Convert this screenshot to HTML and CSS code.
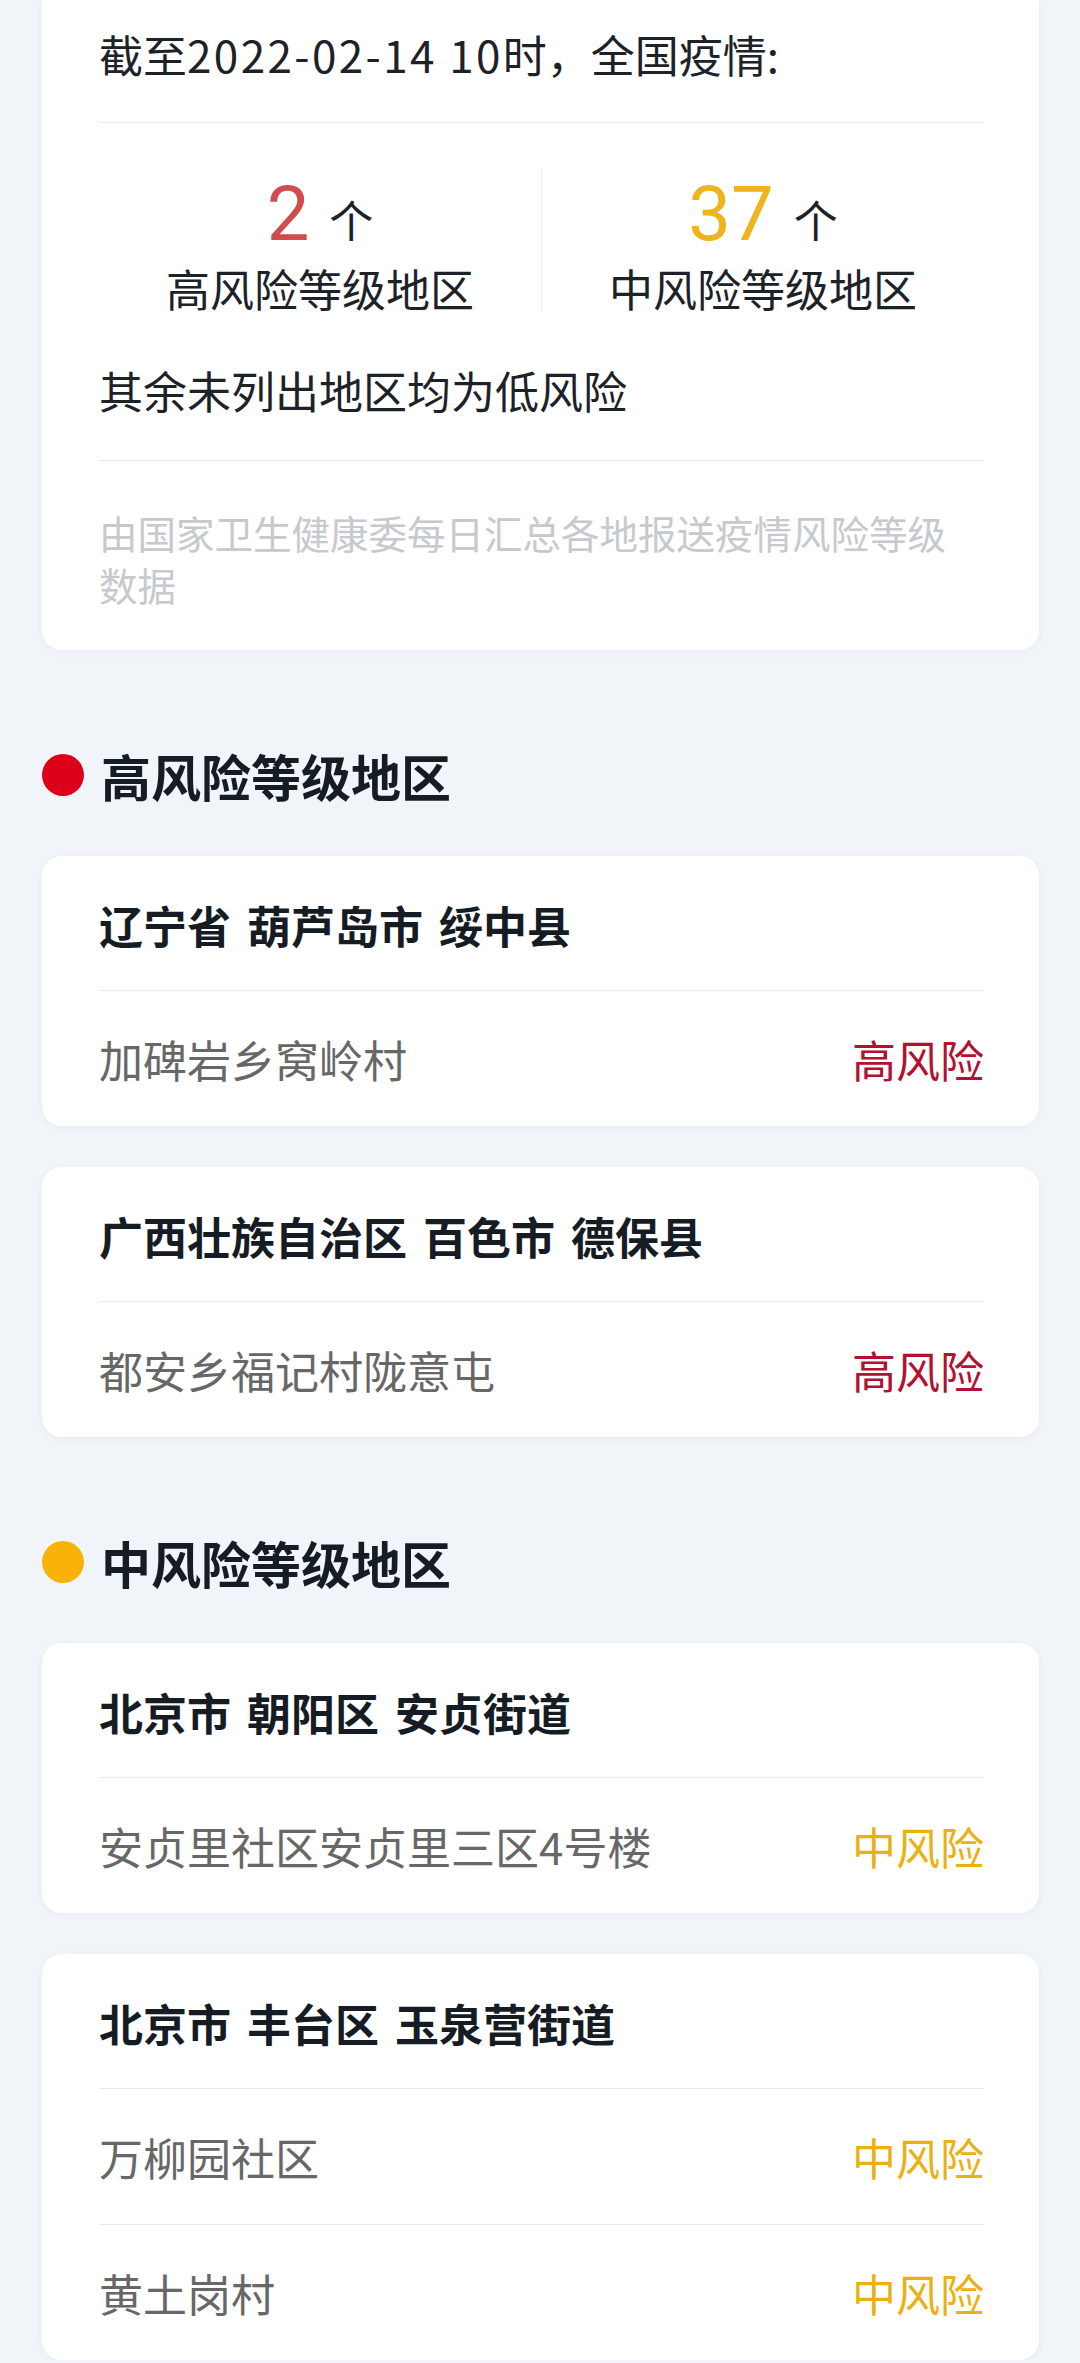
FILE: index.html
```html
<!DOCTYPE html>
<html lang="zh-CN">
<head>
<meta charset="utf-8">
<title>风险等级地区</title>
<link rel="stylesheet" href="styles.css">
</head>
<body>
<main class="page">
  <section class="card card-summary">
    <div class="summary-head">截至<span class="date">2022-02-14 10</span>时，全国疫情:</div>
    <div class="stats">
      <div class="stat">
        <div class="stat-num"><span class="num num-high">2</span><span class="unit">个</span></div>
        <div class="stat-label">高风险等级地区</div>
      </div>
      <div class="stat-divider"></div>
      <div class="stat">
        <div class="stat-num"><span class="num num-mid">37</span><span class="unit">个</span></div>
        <div class="stat-label">中风险等级地区</div>
      </div>
    </div>
    <div class="summary-rest">其余未列出地区均为低风险</div>
    <div class="summary-note">由国家卫生健康委每日汇总各地报送疫情风险等级数据</div>
  </section>

  <h2 class="section-title"><span class="dot dot-high"></span>高风险等级地区</h2>

  <section class="card">
    <div class="row row-title">辽宁省 葫芦岛市 绥中县</div>
    <div class="row"><span class="place">加碑岩乡窝岭村</span><span class="risk risk-high">高风险</span></div>
  </section>

  <section class="card">
    <div class="row row-title">广西壮族自治区 百色市 德保县</div>
    <div class="row"><span class="place">都安乡福记村陇意屯</span><span class="risk risk-high">高风险</span></div>
  </section>

  <h2 class="section-title"><span class="dot dot-mid"></span>中风险等级地区</h2>

  <section class="card">
    <div class="row row-title">北京市 朝阳区 安贞街道</div>
    <div class="row"><span class="place">安贞里社区安贞里三区4号楼</span><span class="risk risk-mid">中风险</span></div>
  </section>

  <section class="card">
    <div class="row row-title">北京市 丰台区 玉泉营街道</div>
    <div class="row"><span class="place">万柳园社区</span><span class="risk risk-mid">中风险</span></div>
    <div class="row"><span class="place">黄土岗村</span><span class="risk risk-mid">中风险</span></div>
  </section>
</main>
</body>
</html>
```

FILE: styles.css
```css
html, body {
  margin: 0;
  padding: 0;
}
body {
  background: #f1f4f8;
  font-family: "Noto Sans CJK SC", "Noto Sans", sans-serif;
  color: #1b2129;
}
.page {
  padding: 0 41px 0 42px;
  display: flex;
  flex-direction: column;
}
.card {
  background: #ffffff;
  border-radius: 20px;
  box-shadow: 0 2px 10px rgba(20, 40, 80, 0.04);
  padding: 0 55px 0 57px;
}
.card + .card {
  margin-top: 41px;
}
.card-summary {
  border-radius: 0 0 20px 20px;
}
.summary-head {
  font-size: 44px;
  line-height: 60px;
  padding: 24px 0 38px;
  border-bottom: 1px solid #ececef;
  color: #1d2229;
}
.date {
  letter-spacing: 2.4px;
}
.stats {
  display: grid;
  grid-template-columns: 1fr 1px 1fr;
  padding-top: 47px;
}
.stat {
  display: flex;
  flex-direction: column;
  align-items: center;
}
.stat-num {
  height: 88px;
  display: flex;
  align-items: center;
  justify-content: center;
}
.num {
  font-family: Roboto, "Noto Sans", sans-serif;
  font-size: 76px;
  line-height: 88px;
}
.num-high { color: #d24b4d; }
.num-mid { color: #efb41c; }
.unit {
  font-size: 44px;
  line-height: 60px;
  margin-left: 20px;
  padding-top: 10px;
  color: #1d2229;
}
.stat-label {
  font-size: 44px;
  line-height: 60px;
  color: #1d2229;
}
.stat-divider {
  width: 1px;
  height: 140px;
  background: #ececef;
}
.summary-rest {
  font-size: 44px;
  line-height: 60px;
  margin-top: 42px;
  padding-bottom: 40px;
  border-bottom: 1px solid #ececef;
  color: #1d2229;
}
.summary-note {
  font-size: 38.5px;
  line-height: 52px;
  padding: 45px 0 40px;
  color: #c6c9cd;
}
.section-title {
  display: flex;
  align-items: center;
  margin: 100px 0 56px;
  font-size: 50px;
  line-height: 50px;
  font-weight: 700;
  color: #161c24;
}
.dot {
  width: 42px;
  height: 42px;
  border-radius: 50%;
  margin-right: 17px;
  flex: none;
}
.dot-high { background: #dc0019; }
.dot-mid { background: #f9b208; }
.row {
  height: 135px;
  display: flex;
  align-items: center;
  justify-content: space-between;
  font-size: 44px;
  border-top: 1px solid #ececef;
}
.row:first-child {
  border-top: none;
}
.row-title {
  height: 134px;
  font-weight: 700;
  color: #161c24;
  word-spacing: 6px;
  padding-top: 4px;
  box-sizing: border-box;
}
.place {
  color: #676767;
}
.risk-high { color: #b21131; }
.risk-mid { color: #e9b112; }
```
